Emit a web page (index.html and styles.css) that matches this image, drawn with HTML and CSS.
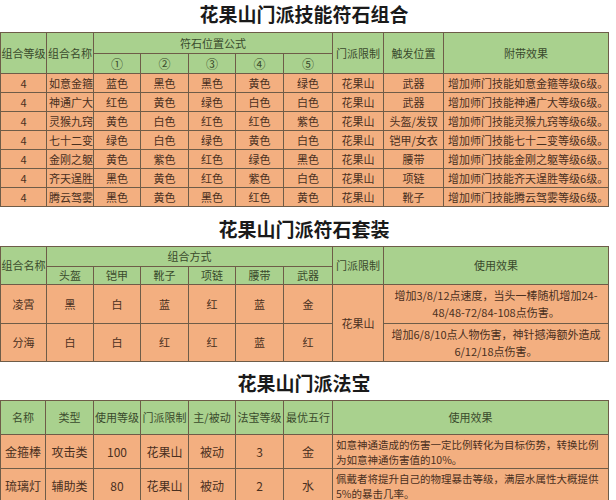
FILE: index.html
```html
<!DOCTYPE html>
<html lang="zh-CN">
<head>
<meta charset="utf-8">
<title>花果山门派</title>
<link rel="stylesheet" href="styles.css">
</head>
<body>
<div class="page">
  <h1 class="title t1">花果山门派技能符石组合</h1>
  <table class="grid">
    <colgroup>
      <col class="w46"><col class="w47"><col class="w47"><col class="w48"><col class="w47"><col class="w48"><col class="w49"><col class="w51"><col class="w60"><col class="w165">
    </colgroup>
    <thead>
      <tr class="h21">
        <th rowspan="2">组合等级</th>
        <th rowspan="2">组合名称</th>
        <th colspan="5">符石位置公式</th>
        <th rowspan="2">门派限制</th>
        <th rowspan="2">触发位置</th>
        <th rowspan="2">附带效果</th>
      </tr>
      <tr class="h20">
        <th class="num">①</th><th class="num">②</th><th class="num">③</th><th class="num">④</th><th class="num">⑤</th>
      </tr>
    </thead>
    <tbody>
      <tr class="h19"><td>4</td><td class="lft">如意金箍</td><td>蓝色</td><td>黑色</td><td>黑色</td><td>黄色</td><td>绿色</td><td>花果山</td><td>武器</td><td class="lft">增加师门技能如意金箍等级6级。</td></tr>
      <tr class="h19"><td>4</td><td class="lft">神通广大</td><td>红色</td><td>黄色</td><td>绿色</td><td>白色</td><td>白色</td><td>花果山</td><td>武器</td><td class="lft">增加师门技能神通广大等级6级。</td></tr>
      <tr class="h19"><td>4</td><td class="lft">灵猴九窍</td><td>黄色</td><td>白色</td><td>红色</td><td>红色</td><td>紫色</td><td>花果山</td><td>头盔/发钗</td><td class="lft">增加师门技能灵猴九窍等级6级。</td></tr>
      <tr class="h19"><td>4</td><td class="lft">七十二变</td><td>绿色</td><td>白色</td><td>绿色</td><td>黄色</td><td>白色</td><td>花果山</td><td>铠甲/女衣</td><td class="lft">增加师门技能七十二变等级6级。</td></tr>
      <tr class="h19"><td>4</td><td class="lft">金刚之躯</td><td>黄色</td><td>紫色</td><td>红色</td><td>绿色</td><td>黑色</td><td>花果山</td><td>腰带</td><td class="lft">增加师门技能金刚之躯等级6级。</td></tr>
      <tr class="h19"><td>4</td><td class="lft">齐天逞胜</td><td>黑色</td><td>黄色</td><td>红色</td><td>紫色</td><td>白色</td><td>花果山</td><td>项链</td><td class="lft">增加师门技能齐天逞胜等级6级。</td></tr>
      <tr class="h19"><td>4</td><td class="lft">腾云驾雾</td><td>黑色</td><td>黄色</td><td>黑色</td><td>红色</td><td>黄色</td><td>花果山</td><td>靴子</td><td class="lft">增加师门技能腾云驾雾等级6级。</td></tr>
    </tbody>
  </table>

  <h2 class="title t2">花果山门派符石套装</h2>
  <table class="grid">
    <colgroup>
      <col class="w46"><col class="w47"><col class="w47"><col class="w48"><col class="w47"><col class="w48"><col class="w49"><col class="w51"><col class="w225">
    </colgroup>
    <thead>
      <tr class="h20">
        <th rowspan="2">组合名称</th>
        <th colspan="6">组合方式</th>
        <th rowspan="2">门派限制</th>
        <th rowspan="2">使用效果</th>
      </tr>
      <tr class="h18">
        <th>头盔</th><th>铠甲</th><th>靴子</th><th>项链</th><th>腰带</th><th>武器</th>
      </tr>
    </thead>
    <tbody>
      <tr class="h39"><td>凌霄</td><td>黑</td><td>白</td><td>蓝</td><td>红</td><td>蓝</td><td>金</td><td rowspan="2">花果山</td><td class="multi">增加3/8/12点速度，当头一棒随机增加24-<br>48/48-72/84-108点伤害。</td></tr>
      <tr class="h38"><td>分海</td><td>白</td><td>白</td><td>红</td><td>红</td><td>蓝</td><td>红</td><td class="multi">增加6/8/10点人物伤害，神针撼海额外造成<br>6/12/18点伤害。</td></tr>
    </tbody>
  </table>

  <h2 class="title t3">花果山门派法宝</h2>
  <table class="grid big">
    <colgroup>
      <col class="w45"><col class="w48"><col class="w47"><col class="w48"><col class="w47"><col class="w48"><col class="w49"><col class="w276">
    </colgroup>
    <thead>
      <tr class="h34">
        <th>名称</th><th>类型</th><th>使用等级</th><th>门派限制</th><th>主/被动</th><th>法宝等级</th><th>最优五行</th><th>使用效果</th>
      </tr>
    </thead>
    <tbody>
      <tr class="h34"><td>金箍棒</td><td>攻击类</td><td>100</td><td>花果山</td><td>被动</td><td>3</td><td>金</td><td class="effect">如意神通造成的伤害一定比例转化为目标伤势，转换比例<br>为如意神通伤害值的10%。</td></tr>
      <tr class="h34"><td>琉璃灯</td><td>辅助类</td><td>80</td><td>花果山</td><td>被动</td><td>2</td><td>水</td><td class="effect">佩戴者将提升自己的物理暴击等级，满层水属性大概提供<br>5%的暴击几率。</td></tr>
    </tbody>
  </table>
</div>
</body>
</html>
```

FILE: styles.css
```css
* { box-sizing: border-box; }

html, body {
  margin: 0;
  padding: 0;
  background: #ffffff;
}

body {
  font-family: "Noto Sans CJK SC", "Noto Sans", sans-serif;
  color: #3d2b1c;
}

.page {
  width: 608px;
}

.title {
  margin: 0;
  text-align: center;
  font-size: 19px;
  font-weight: 700;
  line-height: 28px;
  color: #1a1a1a;
  letter-spacing: 0;
}

.t1 { height: 32px; padding-top: 0; }
.t2 { height: 39px; padding-top: 8px; }
.t3 { height: 38px; padding-top: 7px; }

.grid {
  width: 608px;
  table-layout: fixed;
  border-collapse: collapse;
  font-size: 11px;
  line-height: 13px;
}

.grid th,
.grid td {
  border: 1px solid #6e5c48;
  padding: 0;
  text-align: center;
  vertical-align: middle;
  font-weight: 400;
  white-space: nowrap;
  overflow: hidden;
}

.grid th {
  background: #a9d18e;
  color: #3a4a2c;
}

.grid th.num {
  font-size: 12px;
}

.grid td {
  background: #f3af80;
  color: #4a3020;
}

.grid td.lft {
  text-align: left;
  padding-left: 2px;
}

.grid td:last-child.lft {
  padding-left: 4px;
}

.grid td.multi {
  line-height: 17px;
}

.grid td.effect {
  text-align: left;
  padding-left: 3px;
  line-height: 15px;
}

.big td { font-size: 12px; }
.big td.effect { font-size: 10.5px; }

.w45 { width: 45px; }
.w46 { width: 46px; }
.w47 { width: 47px; }
.w48 { width: 48px; }
.w49 { width: 49px; }
.w51 { width: 51px; }
.w60 { width: 60px; }
.w165 { width: 165px; }
.w225 { width: 225px; }
.w276 { width: 276px; }

.h18 { height: 18px; }
.h19 { height: 19px; }
.h20 { height: 20px; }
.h21 { height: 21px; }
.h34 { height: 34px; }
.h38 { height: 38px; }
.h39 { height: 39px; }
```
